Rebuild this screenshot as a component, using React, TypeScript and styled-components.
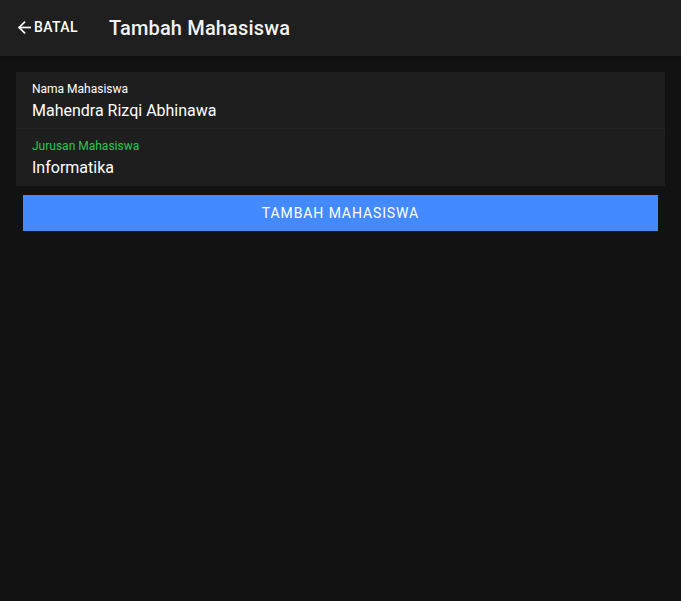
import React from "react";
import styled, { createGlobalStyle } from "styled-components";

const Global = createGlobalStyle`
  html, body { margin: 0; padding: 0; background: #121212; }
  body { font-family: Roboto, "Noto Sans", Arial, sans-serif; color: #fff; }
  * { box-sizing: border-box; }
`;

const Page = styled.div`
  min-height: 601px;
  background: #121212;
  display: flex;
  flex-direction: column;
`;

const Header = styled.header`
  height: 56px;
  background: #1f1f1f;
  display: flex;
  align-items: center;
  padding: 0 16px;
  box-shadow: 0 2px 4px rgba(0, 0, 0, 0.3);
`;

const BackButton = styled.button`
  display: flex;
  align-items: center;
  gap: 1px;
  background: none;
  border: none;
  padding: 0;
  color: #fff;
  font-family: Roboto, Arial, sans-serif;
  font-size: 14px;
  font-weight: 500;
  letter-spacing: 0.4px;
  cursor: pointer;
  margin-top: -2px;
`;

const Title = styled.h1`
  margin: 0 0 0 31px;
  font-size: 20px;
  font-weight: 500;
  color: #f2f2f2;
  letter-spacing: 0.15px;
`;

const Content = styled.main`
  padding: 16px;
  display: flex;
  flex-direction: column;
`;

const Card = styled.div`
  background: #1e1e1f;
  display: flex;
  flex-direction: column;
`;

const Field = styled.div`
  height: 56px;
  padding: 9px 16px 0;
  display: flex;
  flex-direction: column;
`;

const LastField = styled(Field)`
  height: 57px;
`;

const Divider = styled.div`
  height: 1px;
  background: rgba(255, 255, 255, 0.035);
`;

const Label = styled.label<{ $active?: boolean }>`
  font-size: 12px;
  line-height: 17px;
  color: ${(p) => (p.$active ? "#2fc651" : "#ffffff")};
`;

const Value = styled.div`
  font-size: 16px;
  line-height: 25px;
  color: #ffffff;
`;

const SubmitButton = styled.button`
  margin: 9px 7px 0;
  height: 36px;
  border: none;
  background: #448aff;
  color: #fff;
  font-family: Roboto, Arial, sans-serif;
  font-size: 14px;
  font-weight: 400;
  letter-spacing: 0.9px;
  text-transform: uppercase;
  cursor: pointer;
`;

const ArrowIcon = () => (
  <svg width="17" height="17" viewBox="0 0 24 24" fill="none" stroke="#fff" strokeWidth="2.4" strokeLinecap="square">
    <path d="M20 12H5" />
    <path d="M12 4.5L4.5 12L12 19.5" />
  </svg>
);

export default function App() {
  return (
    <>
      <Global />
      <Page>
        <Header>
          <BackButton>
            <ArrowIcon />
            BATAL
          </BackButton>
          <Title>Tambah Mahasiswa</Title>
        </Header>
        <Content>
          <Card>
            <Field>
              <Label>Nama Mahasiswa</Label>
              <Value>Mahendra Rizqi Abhinawa</Value>
            </Field>
            <Divider />
            <LastField>
              <Label $active>Jurusan Mahasiswa</Label>
              <Value>Informatika</Value>
            </LastField>
          </Card>
          <SubmitButton>Tambah Mahasiswa</SubmitButton>
        </Content>
      </Page>
    </>
  );
}
